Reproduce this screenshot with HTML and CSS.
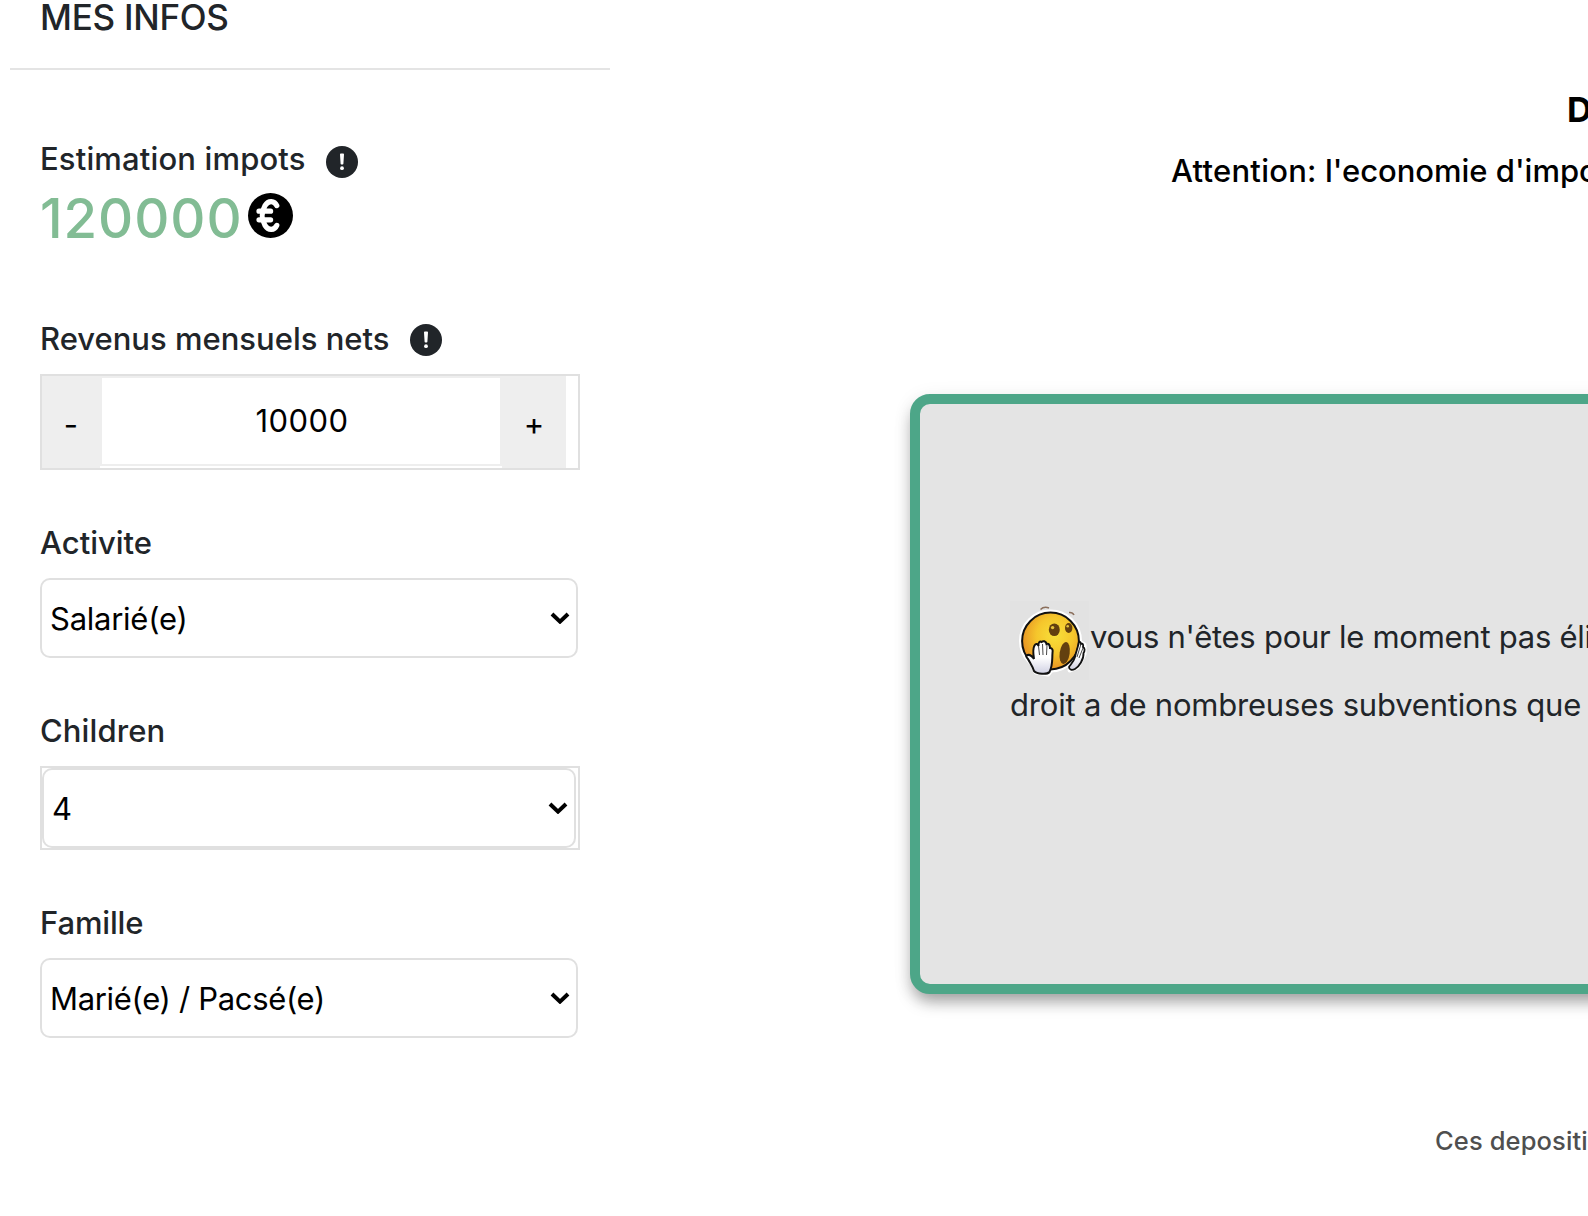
FILE: index.html
```html
<!DOCTYPE html>
<html lang="fr">
<head>
<meta charset="utf-8">
<title>Mes infos</title>
<link rel="stylesheet" href="styles.css">
</head>
<body>
<div class="page">
  <aside class="panel">
    <h1 class="panel-title">MES INFOS</h1>
    <div class="fields">
      <section class="estimate">
        <div class="label-row">
          <span class="label label-estimate">Estimation impots</span>
          <svg class="info info-low" viewBox="0 0 32 32"><circle cx="16" cy="16" r="16"/><path d="M14 8.6a.9.9 0 0 1 .9-1h2.2a.9.9 0 0 1 .9 1l-.6 9.2a.8.8 0 0 1-.8.8h-1.2a.8.8 0 0 1-.8-.8z" fill="#fff"/><circle cx="16" cy="22.2" r="1.9" fill="#fff"/></svg>
        </div>
        <div class="amount-row">
          <span class="amount">120000</span>
          <svg class="euro" viewBox="0 0 45 45"><circle cx="22.5" cy="22.5" r="22.5"/><path d="M28.8 12.6C26.500 7.600 20.500 6.800 17 12.6C13.4 18.600 13.4 26.400 17 32.4C20.5 38.200 26.500 37.400 28.8 32.4M11 18.2H22.6M11 26.8H22.6" fill="none" stroke="#fff" stroke-width="5.200" stroke-linecap="round"/></svg>
        </div>
      </section>
      <section class="field">
        <div class="label-row">
          <span class="label label-income">Revenus mensuels nets</span>
          <svg class="info" viewBox="0 0 32 32"><circle cx="16" cy="16" r="16"/><path d="M14 8.6a.9.9 0 0 1 .9-1h2.2a.9.9 0 0 1 .9 1l-.6 9.2a.8.8 0 0 1-.8.8h-1.2a.8.8 0 0 1-.8-.8z" fill="#fff"/><circle cx="16" cy="22.2" r="1.9" fill="#fff"/></svg>
        </div>
        <div class="stepper">
          <button class="step minus">-</button>
          <div class="step-value">10000</div>
          <button class="step plus">+</button>
        </div>
      </section>
      <section class="field">
        <div class="label-row"><span class="label">Activite</span></div>
        <div class="select"><span class="value-activity">Salarié(e)</span><svg class="chevron" viewBox="0 0 20 12"><path d="M2 2l8 7.6L18 2"/></svg></div>
      </section>
      <section class="field">
        <div class="label-row"><span class="label label-children">Children</span></div>
        <div class="frame"><div class="select"><span>4</span><svg class="chevron" viewBox="0 0 20 12"><path d="M2 2l8 7.6L18 2"/></svg></div></div>
      </section>
      <section class="field">
        <div class="label-row"><span class="label label-family">Famille</span></div>
        <div class="select"><span class="value-family">Marié(e) / Pacsé(e)</span><svg class="chevron" viewBox="0 0 20 12"><path d="M2 2l8 7.6L18 2"/></svg></div>
      </section>
    </div>
  </aside>
  <main class="content">
    <h2 class="headline">D</h2>
    <p class="notice"><span class="notice-lead">Attention:</span> l'economie d'impo</p>
    <div class="card">
      <div class="line line-first">
        <svg class="emoji" viewBox="0 0 80 80">
          <defs>
            <radialGradient id="face" cx=".58" cy=".4" r=".65"><stop offset="0" stop-color="#f8e03a"/><stop offset=".5" stop-color="#f5c62c"/><stop offset="1" stop-color="#e58a22"/></radialGradient>
            <linearGradient id="glove" x2="0" y2="1"><stop offset=".5" stop-color="#fff"/><stop offset="1" stop-color="#cfd0e2"/></linearGradient>
          </defs>
          <rect width="79" height="79" fill="#e2e2e2"/>
          <g fill="#fff" stroke="#fff" stroke-width="5" stroke-linejoin="round">
            <circle cx="40.5" cy="40" r="29"/>
            <path d="M17 54L24 66L26 71L38 73L44 65L42 48Z"/><path d="M69 41L74 44L74 53L67 66L60 69Z"/>
          </g>
          <path d="M30.5 8.5Q34 5 39 7M59 11.5Q62.5 11 64 14" fill="none" stroke="#8b6f5c" stroke-width="1.6"/>
          <circle cx="40.5" cy="40" r="28.4" fill="url(#face)" stroke="#111" stroke-width="2"/>
          <ellipse cx="44.3" cy="28.7" rx="5.5" ry="6.3" fill="#63400f"/><ellipse cx="58.7" cy="27" rx="3.7" ry="5" fill="#63400f"/>
          <circle cx="42.6" cy="26.6" r="1.7" fill="#e6c23a"/><circle cx="57.7" cy="25.2" r="1.3" fill="#e6c23a"/>
          <ellipse cx="54.7" cy="52" rx="5" ry="11.2" fill="#63400f" transform="rotate(8 54.7 52)"/>
          <path d="M69 41C70 40 71 42 71 43C73 42 73.5 44 73 46C75 47 75 50 73.5 52C74 58 69 66 65 68C62 69.5 59 69 59 66C62 62 64 60 65 56C66 51 68 46 69 41Z" fill="url(#glove)" stroke="#111" stroke-width="1.8"/>
          <path d="M16.5 54.5C19 53 22 55 24 58C23 52 23 47 24.5 44.5C26 42 28 43 28.5 45C28 41 30 40 31.5 41C33 39.5 36 40 36.5 43C38.5 42 40 44 40 47C42.5 47 43 49 42.5 52C42 58 43 64 39.5 71C37 74 27 73 24 70C22.5 65 20 62 18 58C16.5 56.5 16 55.5 16.5 54.5Z" fill="url(#glove)" stroke="#111" stroke-width="2"/>
          <path d="M28.5 45L29.5 54M32.5 43L33 54M37 44L36.5 54M71 43L67 56M73 47L69 57" fill="none" stroke="#333" stroke-width=".9"/>
        </svg>
        <span>vous n'êtes pour le moment pas éli</span>
      </div>
      <div class="line line-second">droit a de nombreuses subventions que</div>
    </div>
    <p class="footnote">Ces depositi</p>
  </main>
</div>
</body>
</html>
```

FILE: styles.css
```css
* { box-sizing: border-box; }
body { margin: 0; background: #fff; color: #212529; font-family: Inter, "Liberation Sans", sans-serif; font-size: 31px; }
h1, h2, p { margin: 0; font-weight: 500; }
.page { display: flex; width: 100%; height: 1216px; overflow: hidden; }
.panel { flex: none; width: 610px; padding-left: 10px; }
.panel-title { height: 70px; padding-left: 30px; border-bottom: 2px solid #e4e4e4; font-size: 35px; line-height: 35px; letter-spacing: -.27px; }
.fields { width: 570px; padding: 70px 0 0 30px; display: flex; flex-direction: column; gap: 54px; }
.estimate { height: 126px; }
.label-row { display: flex; align-items: flex-start; height: 38px; }
.label { line-height: 38px; font-weight: 500; white-space: nowrap; }
.label-estimate { width: 286px; letter-spacing: .15px; }
.label-income { width: 370px; }
.label-children { letter-spacing: .12px; }
.label-family { letter-spacing: -.15px; }
.info { flex: none; width: 32px; height: 32px; margin-top: 4px; fill: #212529; }
.info-low { margin-top: 6px; }
.amount-row { display: flex; height: 80px; }
.amount { width: 207.5px; color: #82bc94; font-size: 54.5px; font-weight: 500; line-height: 80px; letter-spacing: .95px; }
.euro { width: 45px; height: 45px; margin-top: 15px; }
.field { display: flex; flex-direction: column; gap: 16px; }
.stepper { display: flex; width: 540px; height: 96px; border: 2px solid #e0e0e0; }
.step { border: 0; padding: 2px 0 0; background: #eee; color: #000; font: 400 31px Inter, sans-serif; }
.minus { width: 58px; padding-top: 4px; }
.plus { width: 64px; }
.step-value { width: 402px; height: 90px; padding-left: 2px; border: 2px solid #eee; color: #000; line-height: 86px; text-align: center; letter-spacing: .4px; }
.select { display: flex; align-items: center; justify-content: space-between; width: 538px; height: 80px; padding: 0 6px 0 8px; border: 2px solid #e0e0e0; border-radius: 10px; color: #000; white-space: nowrap; }
.value-activity { letter-spacing: -.25px; }
.value-family { letter-spacing: -.32px; }
.chevron { width: 20px; height: 12px; fill: none; stroke: #000; stroke-width: 4; }
.frame { width: 540px; height: 84px; border: 2px solid #e0e0e0; }
.frame .select { width: 534px; }
.content { flex: 1; min-width: 0; padding-left: 300px; white-space: nowrap; overflow: hidden; }
.headline { padding: 90px 0 0 657px; color: #000; font-size: 34.5px; line-height: 40px; font-weight: 700; }
.notice { margin: 22px 0 204px; padding-left: 261px; color: #000; line-height: 38px; letter-spacing: -.02px; }
.notice-lead { letter-spacing: .25px; }
.card { height: 600px; margin-right: -40px; padding: 199px 0 0 90px; background: #e4e4e4; border: 10px solid #4da688; border-radius: 20px; box-shadow: 0 10px 16px -3px rgba(0,0,0,.36), 0 3px 20px rgba(0,0,0,.07); }
.line { display: flex; align-items: flex-start; height: 68px; line-height: 68px; }
.line-first { letter-spacing: -.26px; }
.line-second { letter-spacing: -.2px; }
.emoji { flex: none; width: 80px; height: 80px; margin-top: -2px; }
.footnote { padding: 131px 0 0 525px; color: #4f4f4f; font-size: 25.5px; line-height: 32px; letter-spacing: .12px; }
```
